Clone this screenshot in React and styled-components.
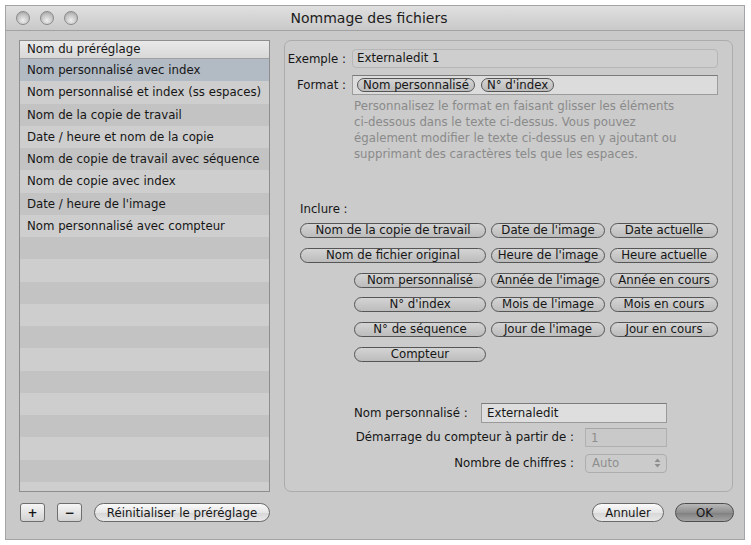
import React from 'react';
import styled, { createGlobalStyle } from 'styled-components';

const GlobalStyle = createGlobalStyle`
  body {
    margin: 0;
    background: #ffffff;
    font-family: "DejaVu Sans", "Liberation Sans", sans-serif;
  }
`;

const Window = styled.div`
  margin: 5px 0 0 5px;
  width: 740px;
  height: 535px;
  box-sizing: border-box;
  border: 1px solid #a4a4a4;
  background: #c9c9c9;
  display: flex;
  flex-direction: column;
  font-size: 11.75px;
  color: #161616;
`;

const TitleBar = styled.div`
  height: 24px;
  flex: none;
  display: flex;
  align-items: center;
  padding-left: 10px;
  background: linear-gradient(#e0e0e0, #c9c9c9);
  border-bottom: 1px solid #a2a2a2;
`;

const Lights = styled.div`
  display: flex;
  gap: 10px;
  width: 200px;
`;

const Light = styled.span`
  width: 12px;
  height: 12px;
  border-radius: 50%;
  border: 1px solid #8a8a8a;
  background: radial-gradient(circle at 50% 70%, #eeeeee 0%, #c4c4c4 55%, #999999 100%);
`;

const Title = styled.div`
  flex: 1;
  text-align: center;
  font-size: 14px;
  padding-right: 222px;
  color: #1c1c1c;
`;

const Content = styled.div`
  display: flex;
  gap: 14px;
  padding: 9px 11px 0 13px;
  height: 452px;
  flex: none;
`;

const LeftColumn = styled.div`
  width: 251px;
  flex: none;
  border: 1px solid #8e8e8e;
  box-sizing: border-box;
  display: flex;
  flex-direction: column;
  overflow: hidden;
  background: #cdcdcd;
`;

const ListHeader = styled.div`
  height: 17px;
  flex: none;
  line-height: 17px;
  padding-left: 7px;
  background: linear-gradient(#e9e9e9, #d8d8d8);
  border-bottom: 1px solid #a0a0a0;
`;

const rowColors = {
  selected: '#b2bac4',
  dark: '#c3c3c3',
  light: '#cecece',
};

const ListRow = styled.div`
  height: 22.25px;
  flex: none;
  line-height: 22px;
  padding-left: 7px;
  white-space: nowrap;
  background: ${p => rowColors[p.$variant]};
`;

const Panel = styled.div`
  flex: 1;
  border: 1px solid #acacac;
  border-radius: 7px;
  background: #cbcbcb;
  padding: 8px 14px 0 2px;
  display: flex;
  flex-direction: column;
`;

const FieldRow = styled.div`
  display: flex;
  align-items: center;
  gap: 6px;
  margin-bottom: ${p => p.$mb || 0}px;
`;

const FieldLabel = styled.div`
  width: 59px;
  text-align: right;
  white-space: nowrap;
`;

const ExampleField = styled.div`
  flex: 1;
  height: 19px;
  box-sizing: border-box;
  border: 1px solid #b6b6b6;
  border-radius: 4px;
  background: #cecece;
  padding-left: 4px;
  line-height: 17px;
`;

const FormatField = styled.div`
  flex: 1;
  height: 20px;
  box-sizing: border-box;
  border: 1px solid #9c9c9c;
  border-top-color: #7a7a7a;
  background: #dcdcdc;
  display: flex;
  align-items: center;
  gap: 6px;
  padding-left: 4px;
`;

const Pill = styled.div`
  height: ${p => p.$h || 15}px;
  box-sizing: border-box;
  border: 1px solid #555;
  border-radius: 8px;
  background: linear-gradient(#d4d4d4, #bcbcbc);
  display: flex;
  align-items: center;
  justify-content: center;
  padding: 0 5px;
  white-space: nowrap;
  line-height: 13px;
  grid-column: ${p => p.$col || 'auto'};
`;

const HelpText = styled.p`
  margin: 3px 0 0 67px;
  color: #8a8a8a;
  line-height: 16px;
  white-space: nowrap;
`;

const SectionLabel = styled.div`
  margin: 40px 0 0 13px;
`;

const PillGrid = styled.div`
  display: grid;
  grid-template-columns: 49px 132px 114px 108px;
  column-gap: 5px;
  row-gap: 9.8px;
  margin: 7px 0 0 13px;
`;

const BottomForm = styled.div`
  margin: 41px 0 0 67px;
  width: 313px;
  display: flex;
  flex-direction: column;
`;

const FormLine = styled.div`
  display: flex;
  align-items: center;
  justify-content: ${p => (p.$spread ? 'space-between' : 'flex-end')};
  gap: 11px;
  margin-top: ${p => p.$mt || 0}px;
  white-space: nowrap;
`;

const TextInput = styled.div`
  width: ${p => p.$w}px;
  height: ${p => p.$h || 20}px;
  box-sizing: border-box;
  border: 1px solid ${p => (p.$disabled ? '#b0b0b0' : '#9a9a9a')};
  border-top-color: ${p => (p.$disabled ? '#a6a6a6' : '#7c7c7c')};
  background: ${p => (p.$disabled ? '#c9c9c9' : '#dedede')};
  color: ${p => (p.$disabled ? '#8e8e8e' : '#161616')};
  padding-left: 5px;
  line-height: 18px;
`;

const Select = styled.div`
  width: 82px;
  height: 19px;
  box-sizing: border-box;
  border: 1px solid #adadad;
  border-radius: 4px;
  background: #cbcbcb;
  color: #8e8e8e;
  display: flex;
  align-items: center;
  justify-content: space-between;
  padding: 0 5px 0 6px;
`;

const Footer = styled.div`
  flex: 1;
  display: flex;
  align-items: flex-start;
  padding: 11px 10px 0 14px;
`;

const SquareButton = styled.div`
  width: 25px;
  height: 19px;
  box-sizing: border-box;
  border: 1px solid #6e6e6e;
  border-radius: 3px;
  background: linear-gradient(#f6f6f6, #d2d2d2);
  display: flex;
  align-items: center;
  justify-content: center;
  font-weight: bold;
  font-size: 12px;
  margin-right: ${p => p.$mr || 0}px;
`;

const RoundButton = styled.div`
  width: ${p => p.$w}px;
  height: 19px;
  box-sizing: border-box;
  border: 1px solid ${p => (p.$primary ? '#4e4e4e' : '#6a6a6a')};
  border-radius: 10px;
  background: ${p =>
    p.$primary
      ? 'linear-gradient(#b8b8b8 0%, #8e8e8e 50%, #7e7e7e 51%, #a4a4a4 100%)'
      : 'linear-gradient(#fbfbfb 0%, #e6e6e6 50%, #d6d6d6 51%, #e8e8e8 100%)'};
  display: flex;
  align-items: center;
  justify-content: center;
  white-space: nowrap;
  margin-left: ${p => p.$ml || 0}px;
`;

const Spacer = styled.div`
  flex: 1;
`;

const presets = [
  'Nom personnalisé avec index',
  'Nom personnalisé et index (ss espaces)',
  'Nom de la copie de travail',
  'Date / heure et nom de la copie',
  'Nom de copie de travail avec séquence',
  'Nom de copie avec index',
  "Date / heure de l'image",
  'Nom personnalisé avec compteur',
];

const includeRows = [
  ["Nom de la copie de travail", "Date de l'image", 'Date actuelle'],
  ['Nom de fichier original', "Heure de l'image", 'Heure actuelle'],
  ['Nom personnalisé', "Année de l'image", 'Année en cours'],
  ["N° d'index", "Mois de l'image", 'Mois en cours'],
  ['N° de séquence', "Jour de l'image", 'Jour en cours'],
  ['Compteur'],
];

const StepperIcon = () => (
  <svg width="7" height="10" viewBox="0 0 7 10">
    <path d="M3.5 0.5 L6.5 4 L0.5 4 Z" fill="#8e8e8e" />
    <path d="M3.5 9.5 L6.5 6 L0.5 6 Z" fill="#8e8e8e" />
  </svg>
);

export default function App() {
  const rows = [];
  for (let i = 0; i < 20; i++) {
    const variant = i === 0 ? 'selected' : i % 2 === 0 ? 'dark' : 'light';
    rows.push(
      <ListRow key={i} $variant={variant}>
        {presets[i] || ''}
      </ListRow>
    );
  }

  return (
    <>
      <GlobalStyle />
      <Window>
        <TitleBar>
          <Lights>
            <Light />
            <Light />
            <Light />
          </Lights>
          <Title>Nommage des fichiers</Title>
        </TitleBar>

        <Content>
          <LeftColumn>
            <ListHeader>Nom du préréglage</ListHeader>
            {rows}
          </LeftColumn>

          <Panel>
            <FieldRow $mb={7}>
              <FieldLabel>Exemple :</FieldLabel>
              <ExampleField>Externaledit 1</ExampleField>
            </FieldRow>
            <FieldRow>
              <FieldLabel>Format :</FieldLabel>
              <FormatField>
                <Pill $h={14}>Nom personnalisé</Pill>
                <Pill $h={14}>N° d'index</Pill>
              </FormatField>
            </FieldRow>
            <HelpText>
              Personnalisez le format en faisant glisser les éléments
              <br />
              ci-dessous dans le texte ci-dessus. Vous pouvez
              <br />
              également modifier le texte ci-dessus en y ajoutant ou
              <br />
              supprimant des caractères tels que les espaces.
            </HelpText>

            <SectionLabel>Inclure :</SectionLabel>
            <PillGrid>
              {includeRows.map((r, ri) =>
                r.map((label, ci) => (
                  <Pill
                    key={label}
                    $col={ci === 0 ? (ri < 2 ? '1 / span 2' : '2') : String(ci + 2)}
                  >
                    {label}
                  </Pill>
                ))
              )}
            </PillGrid>

            <BottomForm>
              <FormLine $spread>
                <span>Nom personnalisé :</span>
                <TextInput $w={186}>Externaledit</TextInput>
              </FormLine>
              <FormLine $mt={5}>
                <span>Démarrage du compteur à partir de :</span>
                <TextInput $w={82} $h={19} $disabled>1</TextInput>
              </FormLine>
              <FormLine $mt={7}>
                <span>Nombre de chiffres :</span>
                <Select>
                  <span>Auto</span>
                  <StepperIcon />
                </Select>
              </FormLine>
            </BottomForm>
          </Panel>
        </Content>

        <Footer>
          <SquareButton $mr={12}>+</SquareButton>
          <SquareButton $mr={12}>−</SquareButton>
          <RoundButton $w={176}>Réinitialiser le préréglage</RoundButton>
          <Spacer />
          <RoundButton $w={72}>Annuler</RoundButton>
          <RoundButton $w={59} $ml={11} $primary>OK</RoundButton>
        </Footer>
      </Window>
    </>
  );
}
